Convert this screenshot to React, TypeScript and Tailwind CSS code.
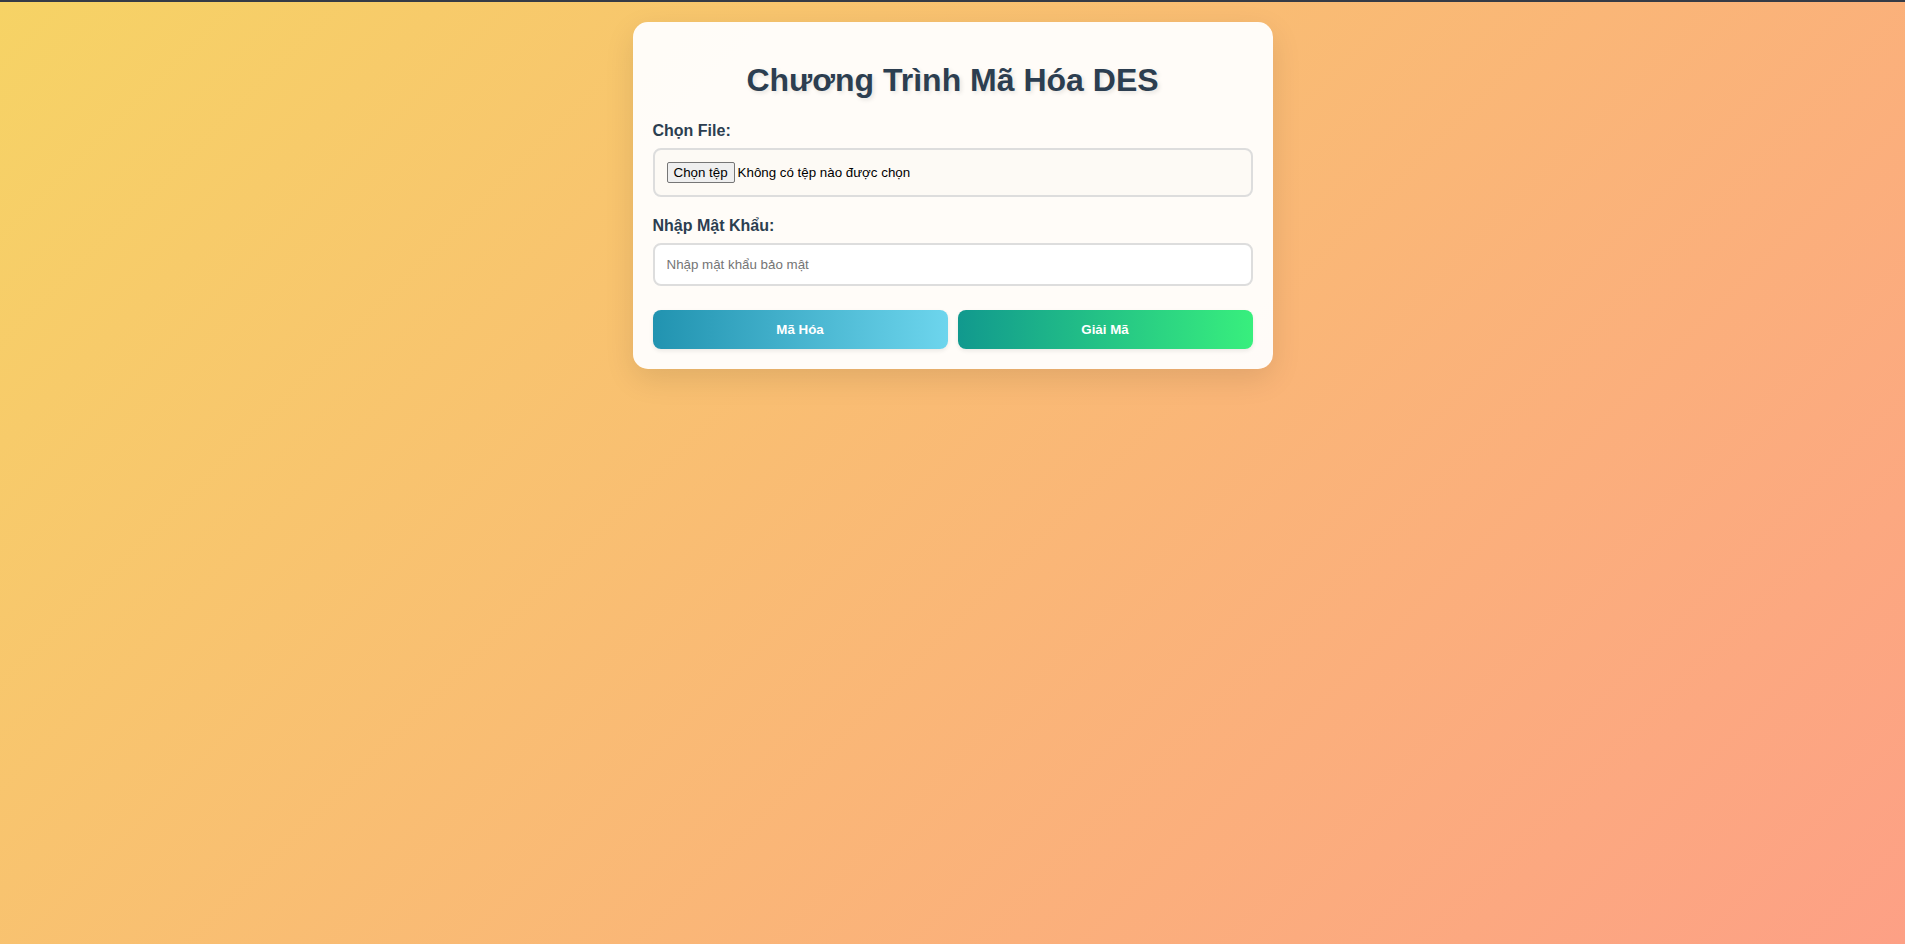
export default function App() {
  return (
    <div className="min-h-screen bg-[linear-gradient(135deg,#f6d365_0%,#fda085_100%)] font-['Liberation_Sans',Arial,sans-serif]">
      <div className="h-[2px] bg-[#353b46]" />
      <div className="mx-auto mt-5 w-[640px] rounded-[15px] bg-white/95 p-5 shadow-[0_10px_30px_rgba(0,0,0,0.1)]">
        <h1 className="mb-[23px] mt-5 text-center text-[32px] font-bold leading-[37px] text-[#2c3e50] [text-shadow:2px_2px_4px_rgba(0,0,0,0.1)]">
          Chương Trình Mã Hóa DES
        </h1>

        <div className="mb-5">
          <label className="mb-2 block text-base font-bold leading-[18px] text-[#2c3e50]">Chọn File:</label>
          <div className="flex items-center rounded-lg border-2 border-[#dddddd] bg-[#fdfaf5] p-3 text-[13.33px] text-black">
            <span className="mr-[3px] rounded-[2px] border border-[#767676] bg-[#efefef] px-[6px] py-[1px] leading-[17px]">
              Chọn tệp
            </span>
            <span className="leading-[17px]">Không có tệp nào được chọn</span>
          </div>
        </div>

        <div className="mb-5">
          <label className="mb-2 block text-base font-bold leading-[18px] text-[#2c3e50]">Nhập Mật Khẩu:</label>
          <input
            type="password"
            placeholder="Nhập mật khẩu bảo mật"
            className="block w-full rounded-lg border-2 border-[#dddddd] bg-white p-3 text-[13.33px] leading-[15px] outline-none placeholder:text-[#757575]"
          />
        </div>

        <div className="mt-6 flex gap-[10px]">
          <button className="flex-1 rounded-lg bg-[linear-gradient(90deg,#2193b0,#6dd5ed)] p-3 text-[13.33px] font-bold leading-[15px] text-white shadow-[0_2px_4px_rgba(0,0,0,0.08)]">
            Mã Hóa
          </button>
          <button className="flex-1 rounded-lg bg-[linear-gradient(90deg,#11998e,#38ef7d)] p-3 text-[13.33px] font-bold leading-[15px] text-white shadow-[0_2px_4px_rgba(0,0,0,0.08)]">
            Giải Mã
          </button>
        </div>
      </div>
    </div>
  )
}
